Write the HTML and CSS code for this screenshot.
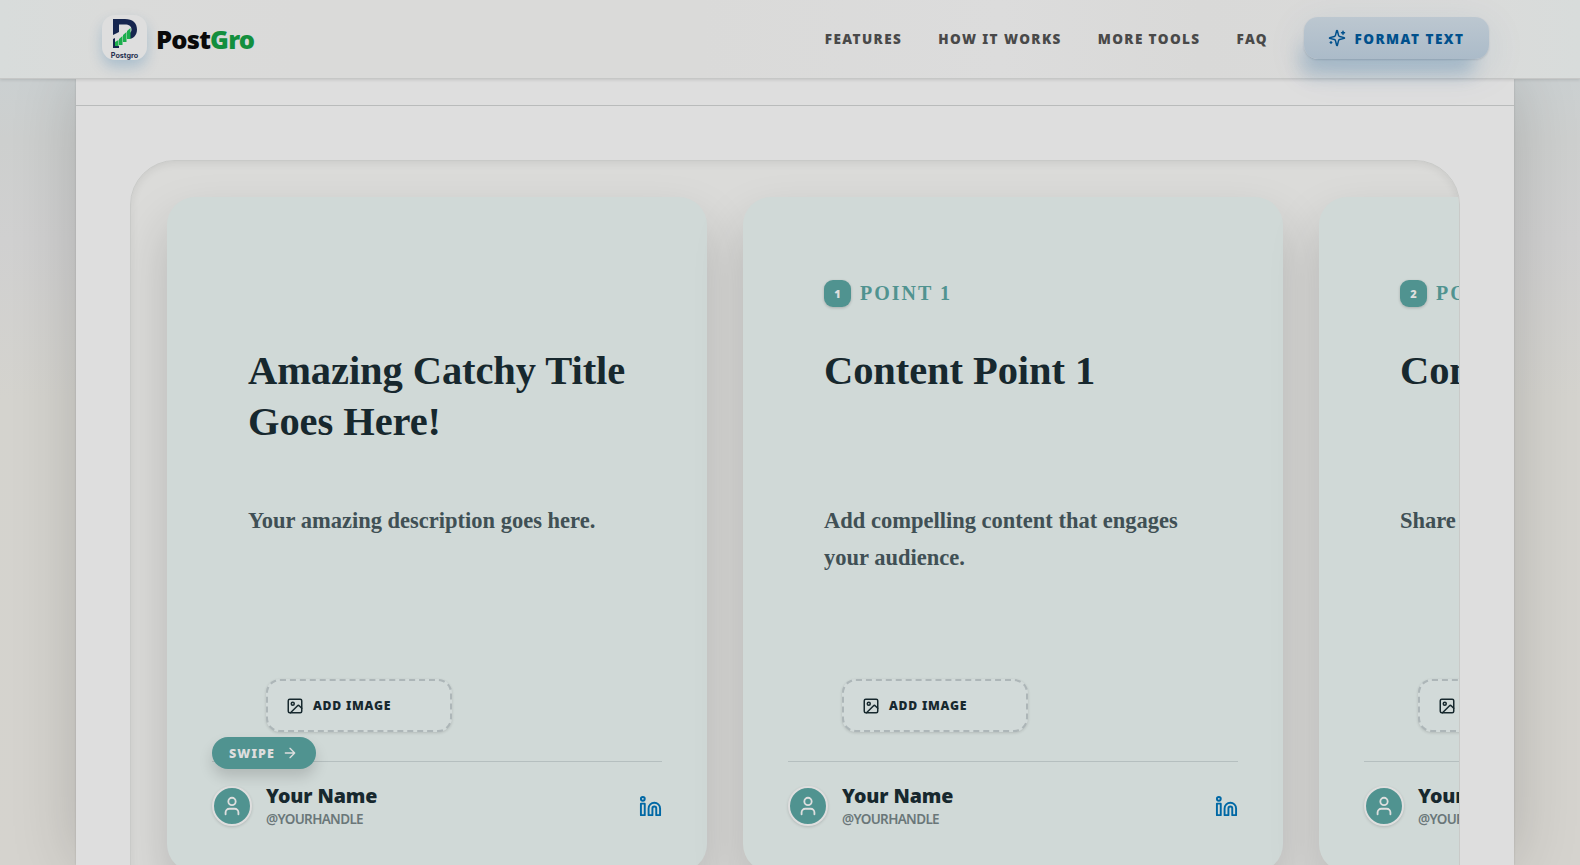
FILE: index.html
```html
<!DOCTYPE html>
<html lang="en">
<head>
    <meta charset="UTF-8">
    <meta name="viewport" content="width=device-width, initial-scale=1.0">
    <title>PostGro</title>
    <link rel="stylesheet" href="styles.css">
</head>
<body>
    <!-- shared icons -->
    <svg class="defs">
        <symbol id="icon-user" viewBox="0 0 24 24"><path d="M19 21v-2a4 4 0 0 0-4-4H9a4 4 0 0 0-4 4v2"/><circle cx="12" cy="7" r="4"/></symbol>
        <symbol id="icon-image" viewBox="0 0 24 24"><rect x="3" y="3" width="18" height="18" rx="2"/><circle cx="9" cy="9" r="2"/><path d="m21 15-3.086-3.086a2 2 0 0 0-2.828 0L6 21"/></symbol>
        <symbol id="icon-linkedin" viewBox="0 0 24 24"><path d="M16 8a6 6 0 0 1 6 6v7h-4v-7a2 2 0 0 0-4 0v7h-4v-7a6 6 0 0 1 6-6z"/><rect x="2" y="9" width="4" height="12"/><circle cx="4" cy="4" r="2"/></symbol>
    </svg>

    <header class="navbar">
        <a class="brand">
            <span class="logo">
                <svg class="logo-mark" viewBox="0 0 24 29">
                    <path class="logo-p" d="M0 0h12C19.500 0 24 4 24 10.500S19.500 20 15.500 20v-5.500c2-.5 3-2 3-4C18.500 7 16 5.500 12 5.500H6V13L0 16z"/>
                    <path class="logo-p" d="M0 20l2-1v8h4v2H0z"/>
                    <path class="logo-bars" d="M2 23l3.500-2v6H2zM6 20l3.500-3v9H6zM10 16l3.500-3v10H10zM14 12l3.500-3v11H14z"/>
                </svg>
                <span class="logo-text">Postgro</span>
            </span>
            <span class="brand-name">Post<span class="green">Gro</span></span>
        </a>
        <nav class="nav-links">
            <a>FEATURES</a>
            <a>HOW IT WORKS</a>
            <a>MORE TOOLS</a>
            <a>FAQ</a>
            <a class="nav-btn">
                <svg class="icon" viewBox="0 0 24 24"><path d="M9.937 15.500A2 2 0 0 0 8.500 14.063l-6.135-1.582a.5.5 0 0 1 0-.962L8.500 9.936A2 2 0 0 0 9.937 8.500l1.582-6.135a.5.5 0 0 1 .963 0L14.063 8.500A2 2 0 0 0 15.500 9.937l6.135 1.581a.5.5 0 0 1 0 .964L15.500 14.063a2 2 0 0 0-1.437 1.437l-1.582 6.135a.5.5 0 0 1-.963 0z"/><path d="M20 3v4M22 5h-4M4 17v2M5 18H3"/></svg>
                <span>FORMAT TEXT</span>
            </a>
        </nav>
    </header>

    <main class="panel">
        <div class="panel-top"></div>
        <div class="panel-body">
            <div class="stage">
                <article class="card">
                    <div class="content">
                        <div class="point"></div>
                        <h2 class="title">Amazing Catchy Title Goes Here!</h2>
                        <p class="desc">Your amazing description goes here.</p>
                        <div class="add-image"><svg class="icon"><use href="#icon-image"/></svg>ADD IMAGE</div>
                    </div>
                    <footer class="footer">
                        <span class="swipe">SWIPE <svg class="icon" viewBox="0 0 24 24"><path d="M5 12h14M12 5l7 7-7 7"/></svg></span>
                        <span class="avatar"><svg class="icon"><use href="#icon-user"/></svg></span>
                        <div class="author">
                            <div class="name">Your Name</div>
                            <div class="handle">@YOURHANDLE</div>
                        </div>
                        <svg class="icon linkedin"><use href="#icon-linkedin"/></svg>
                    </footer>
                </article>

                <article class="card">
                    <div class="content">
                        <div class="point"><span class="badge">1</span>POINT 1</div>
                        <h2 class="title">Content Point 1</h2>
                        <p class="desc">Add compelling content that engages your audience.</p>
                        <div class="add-image"><svg class="icon"><use href="#icon-image"/></svg>ADD IMAGE</div>
                    </div>
                    <footer class="footer">
                        <span class="avatar"><svg class="icon"><use href="#icon-user"/></svg></span>
                        <div class="author">
                            <div class="name">Your Name</div>
                            <div class="handle">@YOURHANDLE</div>
                        </div>
                        <svg class="icon linkedin"><use href="#icon-linkedin"/></svg>
                    </footer>
                </article>

                <article class="card">
                    <div class="content">
                        <div class="point"><span class="badge">2</span>POINT 2</div>
                        <h2 class="title">Content Point 2</h2>
                        <p class="desc">Share valuable insights here.</p>
                        <div class="add-image"><svg class="icon"><use href="#icon-image"/></svg>ADD IMAGE</div>
                    </div>
                    <footer class="footer">
                        <span class="avatar"><svg class="icon"><use href="#icon-user"/></svg></span>
                        <div class="author">
                            <div class="name">Your Name</div>
                            <div class="handle">@YOURHANDLE</div>
                        </div>
                        <svg class="icon linkedin"><use href="#icon-linkedin"/></svg>
                    </footer>
                </article>
            </div>
        </div>
    </main>
</body>
</html>
```
FILE: styles.css
```css
* {
    box-sizing: border-box;
}
body {
    margin: 0;
    height: 865px;
    overflow: hidden;
    display: flex;
    flex-direction: column;
    font-family: "Noto Sans", sans-serif;
    background: linear-gradient(180deg, #cbd0d1 0, #cbd0d1 80px, #cdcfce 140px, #d0d0d0 240px, #d4d3ce 400px, #d5d3ce 100%);
}
.defs {
    display: none;
}
.icon {
    fill: none;
    stroke: currentColor;
    stroke-width: 2;
    stroke-linecap: round;
    stroke-linejoin: round;
    flex-shrink: 0;
}

/* navbar */
.navbar {
    position: relative;
    z-index: 2;
    flex-shrink: 0;
    height: 79px;
    padding: 0 91px 0 102px;
    display: flex;
    align-items: center;
    justify-content: space-between;
    border-bottom: 1px solid #c6c7c6;
    background: linear-gradient(90deg, #d8dcdb 0, #dadbda 110px, #dadad9 300px, #dadad9 700px, #dcdcdc 1000px, #d9d9d8 1200px, #dadbda 1480px, #d8dcdb 100%);
    box-shadow: 0 1px 3px rgba(0, 0, 0, 0.12);
}
.brand {
    display: flex;
    align-items: center;
    gap: 9px;
}
.logo {
    width: 45px;
    height: 45px;
    margin-top: -3px;
    padding-top: 4px;
    border-radius: 13px;
    background: #dedede;
    display: flex;
    flex-direction: column;
    align-items: center;
    box-shadow: 0 7px 14px rgba(0, 90, 160, 0.22);
}
.logo-mark {
    width: 24px;
    height: 29px;
}
.logo-p {
    fill: #16264f;
}
.logo-bars {
    fill: #1cae4d;
}
.logo-text {
    margin-top: 3px;
    font-family: Inter, sans-serif;
    font-size: 7.200px;
    line-height: 9px;
    font-weight: 700;
    color: #26304f;
}
.brand-name {
    margin-top: -1px;
    font-size: 25.500px;
    font-weight: 900;
    letter-spacing: -0.8px;
    color: #0a0a0a;
}
.green {
    color: #138f3e;
}
.nav-links {
    display: flex;
    align-items: center;
    gap: 36px;
    font-size: 13.500px;
    font-weight: 900;
    letter-spacing: 1.4px;
    color: #494949;
}
.nav-btn {
    width: 185px;
    height: 42px;
    margin-top: -2px;
    display: flex;
    align-items: center;
    justify-content: center;
    gap: 8px;
    border-radius: 14px;
    color: #00508c;
    background: linear-gradient(180deg, #bcc7d0, #abbbc9);
    box-shadow: 0 1px 2px rgba(0, 30, 60, 0.14), -9px 22px 18px -6px rgba(0, 80, 145, 0.2), 0 10px 40px rgba(0, 90, 160, 0.1);
}
.nav-btn span {
    margin-top: 1px;
    letter-spacing: 1.5px;
}
.nav-btn .icon {
    width: 18px;
    height: 18px;
}

/* preview panel */
.panel {
    flex: 1;
    min-height: 0;
    margin: 0 66px 0 76px;
    background: #dedede;
    box-shadow: 0 0 2px rgba(0, 0, 0, 0.15), 0 0 60px rgba(0, 0, 0, 0.17);
}
.panel-top {
    height: 27px;
    border-bottom: 1px solid #b9bbbb;
}
.panel-body {
    padding: 54px;
}
.stage {
    height: 750px;
    padding: 36px;
    display: flex;
    gap: 36px;
    overflow: hidden;
    border: 1px solid #c9cac8;
    border-radius: 45px;
    background: #dbdbd9;
    box-shadow: inset 0 2px 8px rgba(0, 0, 0, 0.08);
}

/* slides */
.card {
    flex: 0 0 540px;
    height: 675px;
    padding: 83px 45px 0;
    border-radius: 28px;
    background: #d0d9d7;
    box-shadow: 0 25px 50px rgba(0, 0, 0, 0.17);
}
.content {
    height: 481px;
    padding: 0 36px;
    font-family: "Liberation Serif", serif;
    font-weight: 700;
}
.point {
    height: 27px;
    display: flex;
    align-items: center;
    gap: 9px;
    font-size: 20px;
    letter-spacing: 2px;
    color: #509390;
}
.badge {
    width: 27px;
    height: 27px;
    border-radius: 9px;
    background: #509390;
    color: #dedede;
    font: 900 11px/27px "Noto Sans", sans-serif;
    letter-spacing: 0;
    text-align: center;
    box-shadow: 0 1px 3px rgba(0, 0, 0, 0.2);
}
.title {
    height: 102px;
    margin: 38px -8px 0 0;
    font-size: 40.500px;
    line-height: 51px;
    letter-spacing: -0.08px;
    color: #17282e;
}
.desc {
    height: 74px;
    margin: 55px 0 0;
    font-size: 22.500px;
    line-height: 37px;
    color: #405055;
}
.add-image {
    width: 186px;
    height: 53px;
    margin: 103px 0 0 18px;
    padding: 0 18px;
    display: flex;
    align-items: center;
    gap: 9px;
    border: 2px dashed #adb6b8;
    border-radius: 14px;
    background: #d2dad9;
    color: #17282e;
    font: 900 12.200px "Noto Sans", sans-serif;
    letter-spacing: 0.75px;
    box-shadow: 0 1px 3px rgba(0, 0, 0, 0.14);
}
.add-image .icon {
    width: 18px;
    height: 18px;
}
.footer {
    position: relative;
    padding-top: 21px;
    display: flex;
    align-items: center;
    border-top: 1px solid #b5bfbf;
}
.swipe {
    position: absolute;
    top: -25px;
    left: 0;
    width: 104px;
    height: 32px;
    display: flex;
    align-items: center;
    justify-content: center;
    gap: 7px;
    padding-right: 1px;
    border-radius: 16px;
    background: #509390;
    color: #dedede;
    font-size: 12.500px;
    font-weight: 900;
    letter-spacing: 1.15px;
    box-shadow: 0 8px 14px rgba(0, 0, 0, 0.15);
}
.swipe .icon {
    width: 16px;
    height: 16px;
}
.avatar {
    width: 40px;
    height: 40px;
    display: grid;
    place-items: center;
    border: 2px solid #dedede;
    border-radius: 50%;
    background: #509390;
    color: #dedede;
    box-shadow: 0 1px 3px rgba(0, 0, 0, 0.15);
}
.avatar .icon {
    width: 22px;
    height: 22px;
}
.author {
    margin-left: 14px;
}
.name {
    font-size: 19.600px;
    line-height: 25px;
    font-weight: 900;
    letter-spacing: -0.1px;
    color: #17282e;
}
.handle {
    padding-top: 1px;
    font-size: 13.500px;
    line-height: 20px;
    font-weight: 600;
    letter-spacing: -0.65px;
    color: #6a7779;
}
.linkedin {
    width: 23px;
    height: 23px;
    margin-left: auto;
    color: #0068a5;
}
```
